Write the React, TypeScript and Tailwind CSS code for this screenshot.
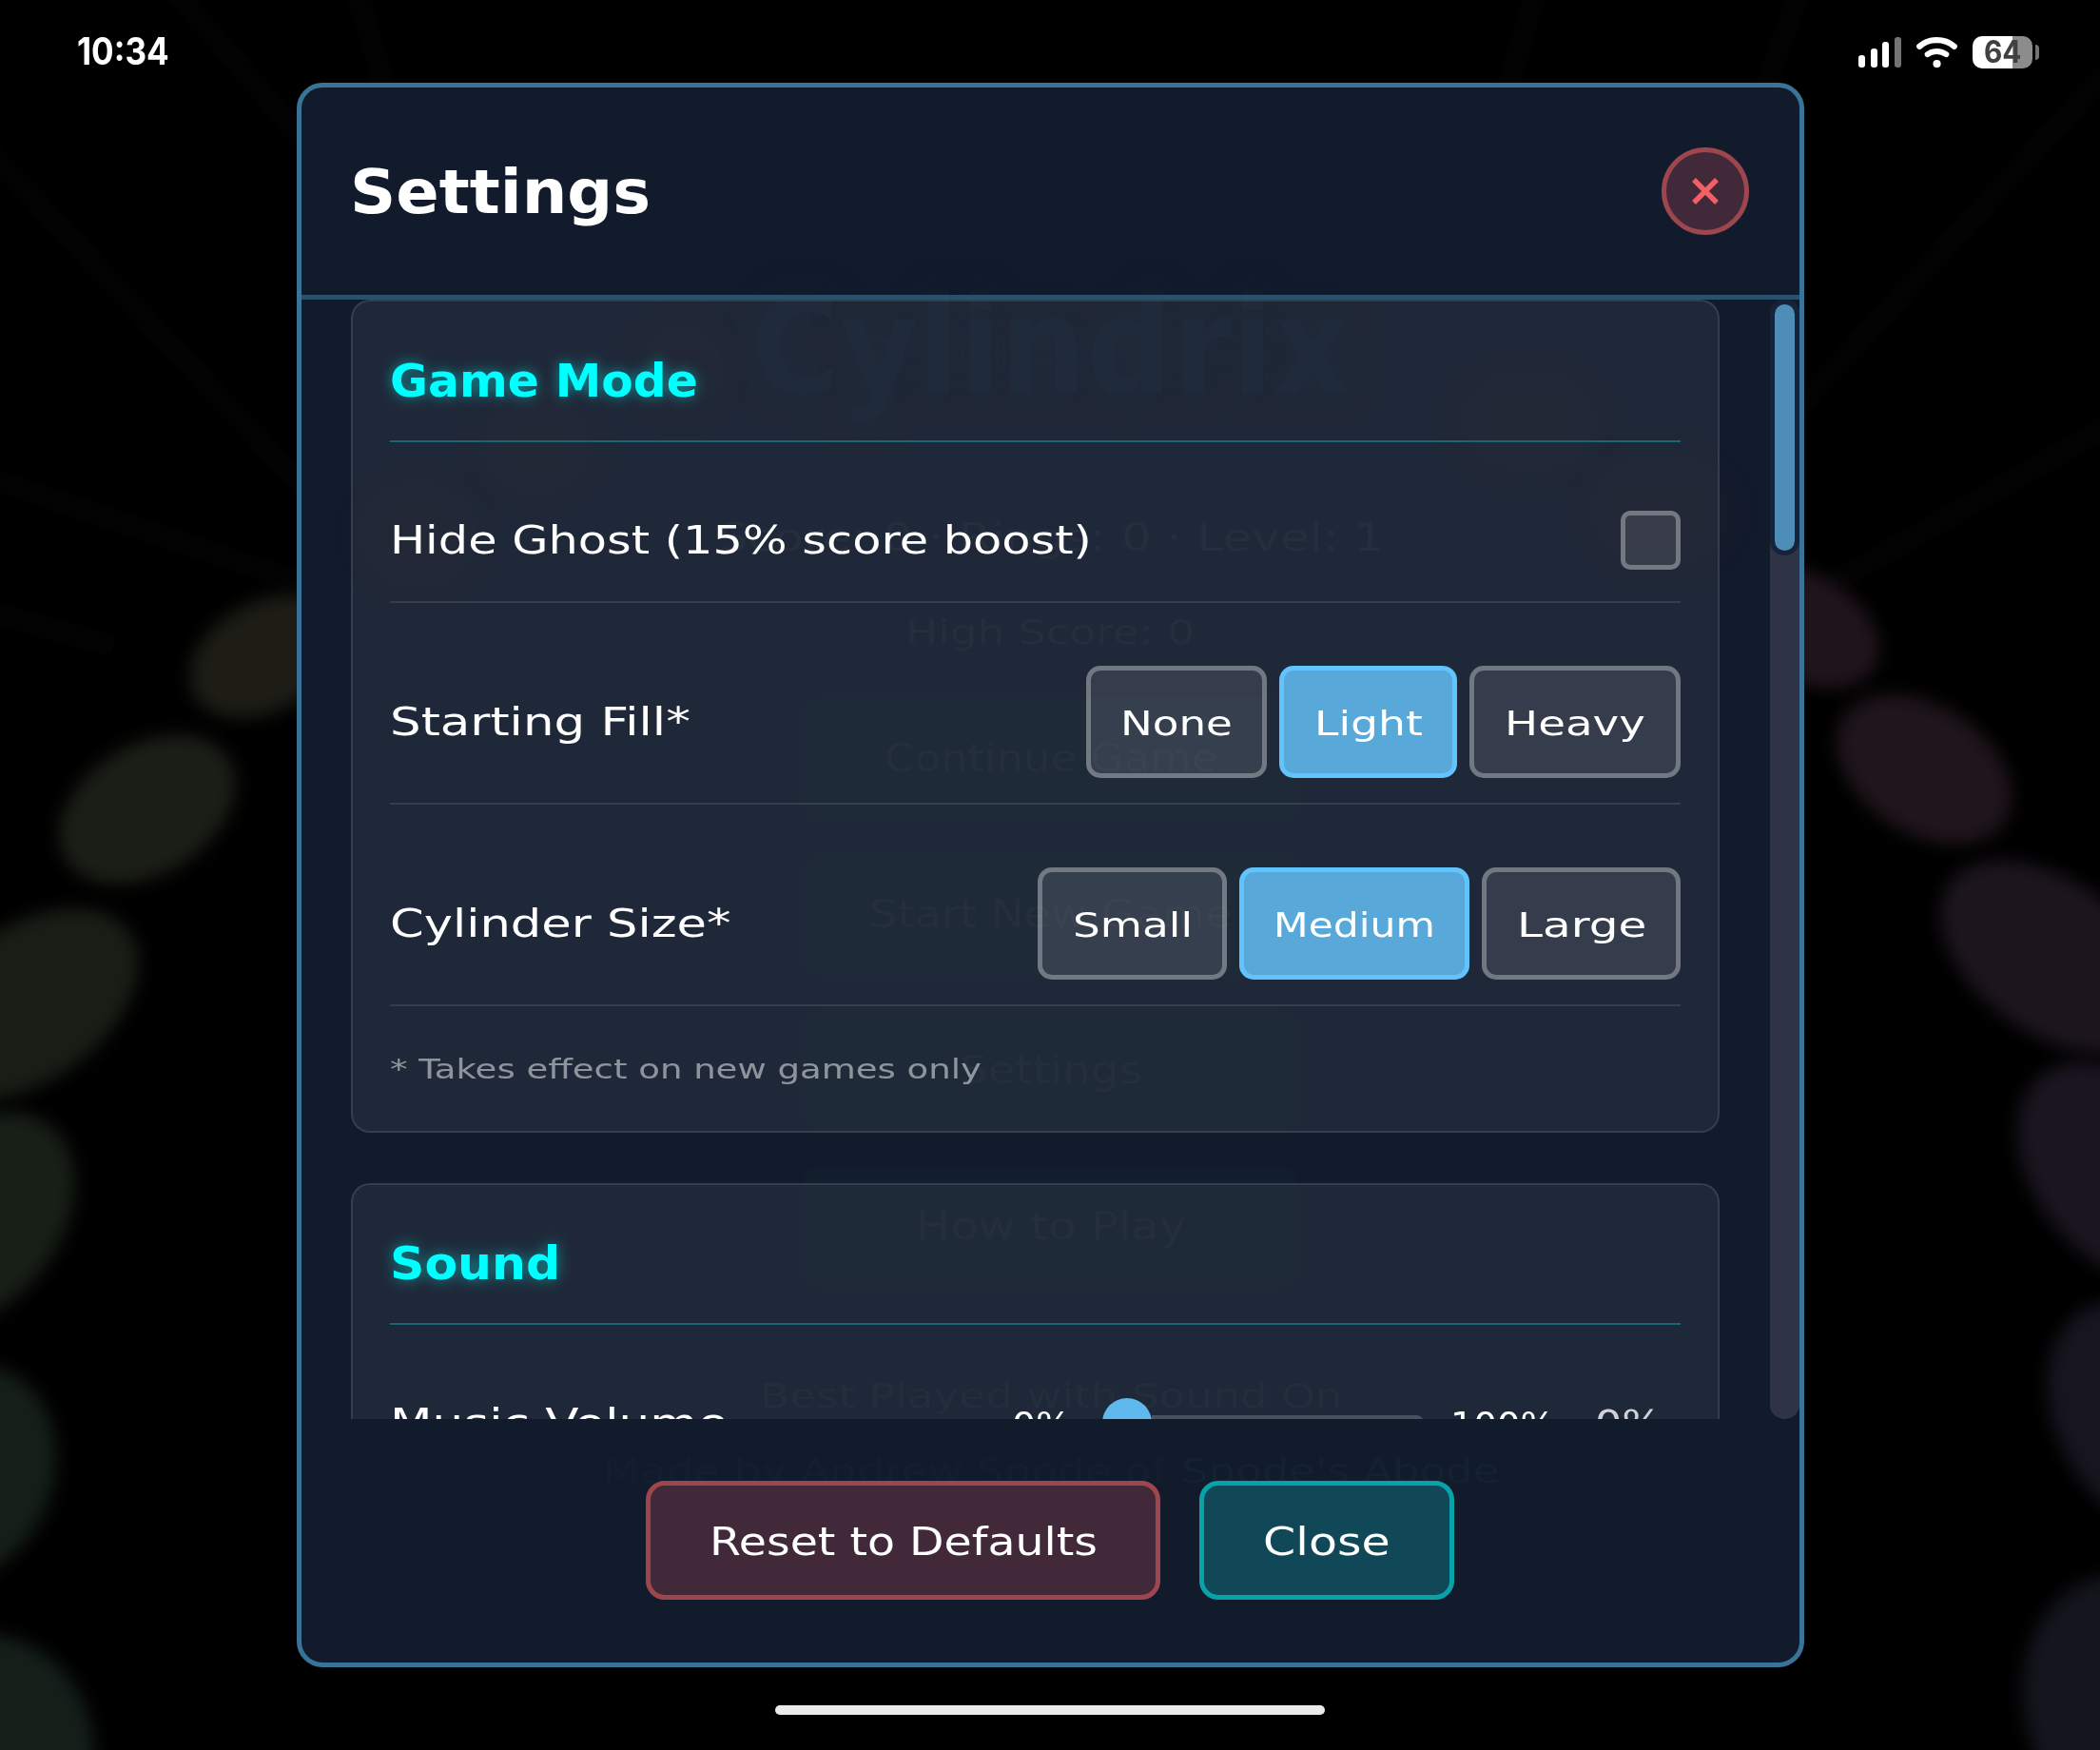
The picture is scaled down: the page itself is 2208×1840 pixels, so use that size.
import { useLayoutEffect, useRef, useState } from "react";
import clsx from "clsx";

/** One line of text stretched horizontally to fill the width given by its class. */
function Wide({ text, className }: { text: string; className: string }) {
  const outer = useRef<HTMLSpanElement>(null);
  const inner = useRef<HTMLSpanElement>(null);
  const [scale, setScale] = useState(1);
  useLayoutEffect(() => {
    if (outer.current && inner.current) {
      setScale(outer.current.clientWidth / inner.current.offsetWidth);
    }
  }, [text]);
  return (
    <span ref={outer} className={clsx("block shrink-0 whitespace-nowrap text-left", className)}>
      <span
        ref={inner}
        className="inline-block origin-left"
        style={{ transform: `scaleX(${scale})` }}
      >
        {text}
      </span>
    </span>
  );
}

const PETALS = [
  [280, 690, 86, 57, -28, "#1d1d16"],
  [155, 851, 101, 68, -32, "#1b1e16"],
  [28, 1056, 132, 81, -35, "#181e16"],
  [-28, 1283, 128, 89, -50, "#171f16"],
  [-42, 1549, 118, 97, -65, "#151f18"],
  [-30, 1856, 140, 126, -65, "#151f1a"],
  [1894, 659, 88, 56, 28, "#20141b"],
  [2023, 809, 101, 67, 33, "#1f151b"],
  [2157, 1006, 132, 80, 36, "#1c151e"],
  [2230, 1233, 132, 89, 50, "#1a1520"],
  [2256, 1490, 130, 93, 60, "#17151f"],
  [2250, 1797, 146, 120, 68, "#14151d"],
] as const;

const RAYS = [
  [-20, 150, 420, 620],
  [140, -60, 330, 160],
  [-20, 500, 340, 620],
  [360, -60, 410, 110],
  [-20, 640, 120, 680],
  [2230, 60, 1880, 440],
  [1910, -60, 1850, 110],
  [2230, 440, 1880, 640],
  [1630, -60, 1580, 110],
] as const;

function Backdrop() {
  return (
    <svg className="absolute inset-0" width="2208" height="1840" viewBox="0 0 2208 1840">
      <defs>
        <filter id="soft" x="-30%" y="-30%" width="160%" height="160%" colorInterpolationFilters="sRGB">
          <feGaussianBlur stdDeviation="9" />
        </filter>
      </defs>
      {RAYS.map(([x1, y1, x2, y2], i) => (
        <g key={i} stroke="#fff0c8" strokeOpacity="0.006">
          <line x1={x1} y1={y1} x2={x2} y2={y2} strokeWidth="24" />
          <line x1={x1} y1={y1} x2={x2} y2={y2} strokeWidth="10" />
        </g>
      ))}
      {PETALS.map(([cx, cy, rx, ry, rot, fill], i) => (
        <ellipse
          key={i}
          cx={cx}
          cy={cy}
          rx={rx}
          ry={ry}
          fill={fill}
          transform={`rotate(${rot} ${cx} ${cy})`}
          filter="url(#soft)"
        />
      ))}
    </svg>
  );
}

/** The main menu, showing faintly through the dialog. */
function MenuBehind() {
  return (
    <div className="absolute inset-0 flex flex-col items-center overflow-hidden text-[#172130]">
      <div className="absolute left-[350px] top-[245px] h-[100px] w-[100px] rounded-full bg-[#5a2020]/[0.04] blur-lg" />
      <div className="absolute left-[190px] top-[325px] h-[100px] w-[115px] rounded-full bg-[#5a2020]/[0.05] blur-lg" />
      <div className="absolute left-[60px] top-[415px] h-[110px] w-[125px] rounded-full bg-[#5a2020]/[0.05] blur-lg" />
      <div className="absolute left-[1220px] top-[300px] h-[100px] w-[140px] rounded-full bg-[#5a2020]/[0.05] blur-lg" />
      <div className="absolute left-[1355px] top-[390px] h-[110px] w-[150px] rounded-full bg-[#5a2020]/[0.05] blur-lg" />
      <Wide
        text="Cylindrix"
        className="mt-[193px] w-[630px] text-[140px] font-bold leading-[160px] text-[#121e2e] [text-shadow:0_0_40px_rgba(19,38,50,0.3)]"
      />
      <Wide text="Score: 0 · Rings: 0 · Level: 1" className="mt-[90px] w-[700px] text-[40px] leading-[60px]" />
      <Wide text="High Score: 0" className="mt-[40px] w-[305px] text-[36px] leading-[60px]" />
      <div className="mt-[39px] flex w-[523px] flex-col gap-[36px]">
        {[
          ["Continue Game", "w-[350px]"],
          ["Start New Game", "w-[382px]"],
          ["Settings", "w-[192px]"],
          ["How to Play", "w-[284px]"],
        ].map(([label, width]) => (
          <div
            key={label}
            className="flex h-[128px] items-center justify-center rounded-[20px] bg-[#121d2d] text-[41px]"
          >
            <Wide text={label} className={width} />
          </div>
        ))}
      </div>
      <Wide
        text="Best Played with Sound On"
        className="mt-[84px] w-[612px] text-[36px] leading-[60px] text-[#162030]"
      />
      <div className="mt-[19px] flex gap-[16px] text-[36px] leading-[60px] text-[#151e2e]">
        <Wide text="Made by Andrew Spode of" className="w-[592px]" />
        <Wide text="Spode's Abode" className="w-[334px] text-[#122231]" />
      </div>
    </div>
  );
}

function StatusBar() {
  return (
    <div className="relative flex h-[87px] items-start justify-between pl-[81px] pr-[64px] pt-[37px]">
      <Wide
        text="10:34"
        className="mt-[-3px] w-[97px] font-['Inter'] text-[39px] font-bold leading-[39px] text-white"
      />
      <div className="flex items-start">
        <div className="mt-[2px] flex h-[32px] items-end gap-[5.5px]">
          <div className="h-[13px] w-[7px] rounded-[3px] bg-white" />
          <div className="h-[20px] w-[7px] rounded-[3px] bg-white" />
          <div className="h-[27px] w-[7px] rounded-[3px] bg-white" />
          <div className="h-[32px] w-[7px] rounded-[3px] bg-[#737373]" />
        </div>
        <svg className="ml-[16.5px] mt-[2px]" width="43" height="32" viewBox="0 0 43 32" fill="none">
          <path d="M3.2 9.8C13.5 0.9 29.5 0.9 39.8 9.8" stroke="#fff" strokeWidth="6.2" strokeLinecap="round" />
          <path d="M11.7 18.2C17.4 13.9 25.6 13.9 31.3 18.2" stroke="#fff" strokeWidth="6" strokeLinecap="round" />
          <circle cx="21.5" cy="28" r="4.1" fill="#fff" />
        </svg>
        <div className="ml-[16px] mt-[1px] flex h-[34px] w-[63px] items-center justify-center rounded-[10px] bg-[linear-gradient(90deg,#fff_66.5%,#8c8c8c_66.5%)] font-['Inter'] text-[32px] font-bold leading-[34px] text-[#404040]">
          <Wide text="64" className="w-[39px]" />
        </div>
        <div className="ml-[3px] mt-[10px] h-[16px] w-[4px] rounded-r-[4px] bg-[#737373]" />
      </div>
    </div>
  );
}

function SectionTitle({ text, width }: { text: string; width: string }) {
  return (
    <h2 className="border-b-2 border-[#00ffff]/30 pb-[18px] text-[48px] font-bold leading-[90px] text-[#00ffff] [text-shadow:0_0_14px_rgba(0,255,255,0.5)]">
      <Wide text={text} className={width} />
    </h2>
  );
}

type Option = { label: string; box: string; text: string };

function ChoiceRow({
  label,
  width,
  options,
  initial,
}: {
  label: string;
  width: string;
  options: Option[];
  initial: string;
}) {
  const [value, setValue] = useState(initial);
  return (
    <div className="flex items-center justify-between border-b-2 border-white/10 pb-[26px] pt-[66px]">
      <Wide text={label} className={clsx("text-[41px] leading-[60px]", width)} />
      <div className="flex gap-[13px]">
        {options.map((o) => (
          <button
            key={o.label}
            onClick={() => setValue(o.label)}
            className={clsx(
              "flex h-[118px] items-center justify-center rounded-[15px] border-[5px] pt-[3px] text-[36px] leading-[60px]",
              o.box,
              o.label === value ? "border-[#62c4fd] bg-[#5cafe1]/95" : "border-white/30 bg-white/10",
            )}
          >
            <Wide text={o.label} className={o.text} />
          </button>
        ))}
      </div>
    </div>
  );
}

export default function App() {
  return (
    <div className="relative flex h-[1840px] w-[2208px] flex-col overflow-hidden bg-black font-['DejaVu_Sans',sans-serif] text-white">
      <Backdrop />
      <StatusBar />
      <div className="relative ml-[312px] flex h-[1666px] w-[1585px] flex-col overflow-hidden rounded-[27px] border-[5px] border-[#3a7398] bg-[#121b2c]">
        <MenuBehind />

        <header className="relative flex h-[223px] shrink-0 items-center justify-between border-b-[5px] border-[#2a506e] pl-[51px] pr-[53px]">
          <h1 className="pt-[2px] text-[64px] font-bold leading-[80px]">
            <Wide text="Settings" className="w-[316px]" />
          </h1>
          <button
            aria-label="Close"
            className="flex h-[92px] w-[92px] items-center justify-center rounded-full border-[5px] border-[#9e464e] bg-[#422939]"
          >
            <svg width="28" height="28" viewBox="0 0 28 28" stroke="#f26066" strokeWidth="5.4">
              <path d="M2 2L26 26M26 2L2 26" />
            </svg>
          </button>
        </header>

        <div className="relative flex h-[1177px] shrink-0 justify-between overflow-hidden pl-[52px]">
          <div className="flex w-[1439px] flex-col gap-[53px]">
            <section className="shrink-0 rounded-[20px] border-2 border-white/10 bg-[#f2f2ff]/[0.06] px-[39px] pt-[38px]">
              <SectionTitle text="Game Mode" width="w-[324px]" />
              <div className="flex items-center justify-between border-b-2 border-white/10 pb-[33px] pt-[72px]">
                <Wide text="Hide Ghost (15% score boost)" className="w-[738px] text-[41px] leading-[60px]" />
                <div className="h-[62px] w-[63px] rounded-[10px] border-[5px] border-white/30 bg-white/10" />
              </div>
              <ChoiceRow
                label="Starting Fill*"
                width="w-[316px]"
                initial="Light"
                options={[
                  { label: "None", box: "w-[190px]", text: "w-[118px]" },
                  { label: "Light", box: "w-[187px]", text: "w-[114px]" },
                  { label: "Heavy", box: "w-[222px]", text: "w-[148px]" },
                ]}
              />
              <ChoiceRow
                label="Cylinder Size*"
                width="w-[358px]"
                initial="Medium"
                options={[
                  { label: "Small", box: "w-[199px]", text: "w-[126px]" },
                  { label: "Medium", box: "w-[242px]", text: "w-[170px]" },
                  { label: "Large", box: "w-[209px]", text: "w-[136px]" },
                ]}
              />
              <div className="flex h-[131px] items-center text-[29px] leading-[40px] text-white/50">
                <Wide text="* Takes effect on new games only" className="w-[622px]" />
              </div>
            </section>

            <section className="h-[600px] shrink-0 rounded-[20px] border-2 border-white/10 bg-[#f2f2ff]/[0.06] px-[39px] pt-[37px]">
              <SectionTitle text="Sound" width="w-[179px]" />
              <div className="flex h-[129px] items-center pt-[77px]">
                <Wide text="Music Volume" className="w-[355px] text-[41px] leading-[52px]" />
                <Wide text="0%" className="ml-[299px] w-[63px] pt-[4px] text-[35px] leading-[52px]" />
                <div className="ml-[32px] flex h-[52px] w-[338px] items-center">
                  <div className="h-[52px] w-[52px] rounded-full bg-[#5fb8ee]" />
                  <div className="h-[16px] flex-1 rounded-r-[8px] bg-[#4a505e]" />
                </div>
                <Wide text="100%" className="ml-[28px] w-[110px] pt-[4px] text-[35px] leading-[52px]" />
                <Wide text="0%" className="ml-[42px] w-[71px] pt-[1px] text-[37px] leading-[52px] text-[#d0d2d6]" />
              </div>
            </section>
          </div>

          <div className="w-[31px] rounded-[15px] bg-[#2e3345]">
            <div className="h-[269px] rounded-[15px] border-[5px] border-[#16233a] bg-[#16233a]">
              <div className="h-full rounded-[11px] bg-[#4d8db7]" />
            </div>
          </div>
        </div>

        <footer className="relative flex justify-center gap-[41px] pr-[1px] pt-[65px] text-[41px] leading-[60px]">
          <button className="flex h-[125px] w-[541px] items-center justify-center rounded-[20px] border-[5px] border-[#9e464e] bg-[#422939] pt-[3px]">
            <Wide text="Reset to Defaults" className="w-[408px]" />
          </button>
          <button className="flex h-[125px] w-[268px] items-center justify-center rounded-[20px] border-[5px] border-[#07a3a9] bg-[#104858] pt-[3px]">
            <Wide text="Close" className="w-[134px]" />
          </button>
        </footer>
      </div>
      <div className="relative mx-auto mt-[40px] h-[10px] w-[578px] rounded-full bg-[#ebebeb]" />
    </div>
  );
}
